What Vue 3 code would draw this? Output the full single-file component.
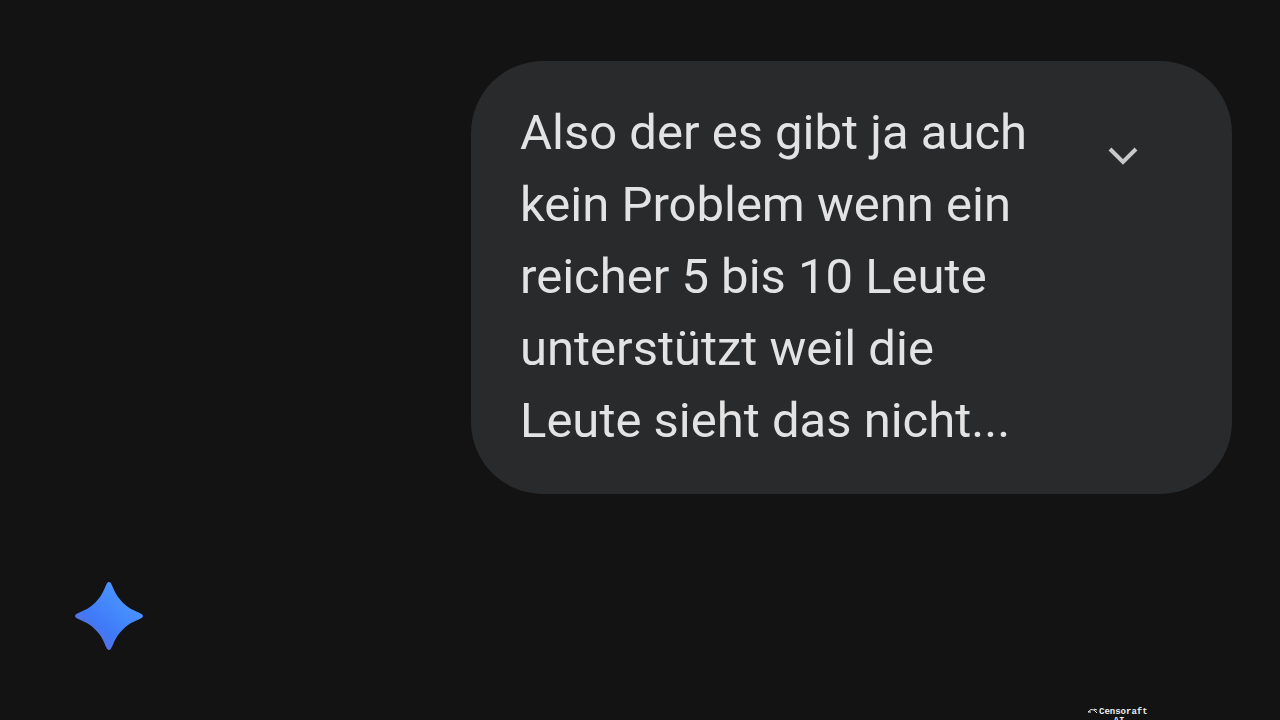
<script setup>
const message = 'Also der es gibt ja auch kein Problem wenn ein reicher 5 bis 10 Leute unterstützt weil die Leute sieht das nicht...'
</script>

<template>
  <main class="chat">
    <section class="bubble">
      <p class="message">{{ message }}</p>
      <button class="expand" type="button" aria-label="Nachricht maximieren">
        <svg viewBox="0 0 32 20" width="32" height="20" aria-hidden="true">
          <path d="M3 3 16 16 29 3" />
        </svg>
      </button>
    </section>
    <svg class="spark" viewBox="0 0 68 68" width="68" height="68" aria-hidden="true">
      <defs>
        <linearGradient id="spark-fill" x1="0.2" y1="0.8" x2="0.75" y2="0.2">
          <stop offset="0" stop-color="#5a6fdc" />
          <stop offset="0.3" stop-color="#3f7af8" />
          <stop offset="1" stop-color="#4a94ff" />
        </linearGradient>
      </defs>
      <path fill="url(#spark-fill)" d="M34 0C37 0 38 8 43 15C46 19 49 22 53 25C60 30 68 31 68 34C68 37 60 38 53 43C49 46 46 49 43 53C38 60 37 68 34 68C31 68 30 60 25 53C22 49 19 46 15 43C8 38 0 37 0 34C0 31 8 30 15 25C19 22 22 19 25 15C30 8 31 0 34 0Z" />
    </svg>
    <footer class="mark">
      <span class="mark-line">
        <svg viewBox="0 0 11 7" width="11" height="7" aria-hidden="true">
          <path d="M1 4Q4 0 7 2L10 5M1 4H4M7 1 10 2" />
        </svg>
        Censoraft
      </span>
      <span>AI</span>
    </footer>
  </main>
</template>

<style>
body {
  margin: 0;
  background: #131313;
}
</style>

<style scoped>
.chat {
  box-sizing: border-box;
  height: 100vh;
  padding: 61px 48px 0 75px;
  overflow: hidden;
  display: flex;
  flex-direction: column;
  background: #131313;
  font-family: Roboto, "Liberation Sans", sans-serif;
}
.bubble {
  box-sizing: border-box;
  align-self: flex-end;
  width: 100%;
  max-width: 761px;
  padding: 36px 93px 37px 49px;
  display: flex;
  justify-content: space-between;
  border-radius: 72px;
  background: #292a2c;
}
.message {
  max-width: 530px;
  margin: 0;
  color: #e3e3e3;
  font-size: 49px;
  line-height: 72px;
}
.expand {
  align-self: flex-start;
  margin-top: 49px;
  padding: 0;
  border: 0;
  background: none;
  line-height: 0;
}
.expand path {
  fill: none;
  stroke: #c8c9ca;
  stroke-width: 4;
}
.spark {
  flex: none;
  margin-top: 88px;
}
.mark {
  align-self: flex-end;
  width: 64px;
  margin: 58px 81px 0 0;
  color: #eeeeee;
  font: bold 9px/9px "Liberation Mono", monospace;
  text-align: center;
}
.mark span {
  display: block;
}
.mark .mark-line {
  display: flex;
  gap: 1px;
}
.mark path {
  fill: none;
  stroke: #eeeeee;
}
</style>
